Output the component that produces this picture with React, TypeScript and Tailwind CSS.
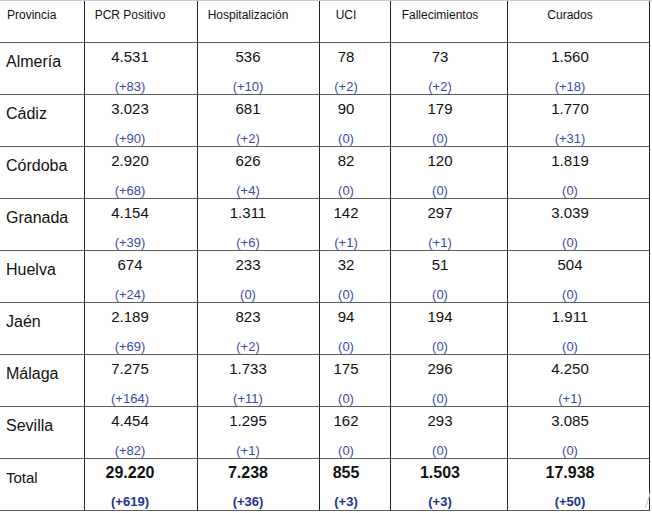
const COLS = ['PCR Positivo', 'Hospitalización', 'UCI', 'Fallecimientos', 'Curados'];

type Row = { name: string; vals: [string, string][] };

const ROWS: Row[] = [
  { name: 'Almería', vals: [['4.531', '+83'], ['536', '+10'], ['78', '+2'], ['73', '+2'], ['1.560', '+18']] },
  { name: 'Cádiz', vals: [['3.023', '+90'], ['681', '+2'], ['90', '0'], ['179', '0'], ['1.770', '+31']] },
  { name: 'Córdoba', vals: [['2.920', '+68'], ['626', '+4'], ['82', '0'], ['120', '0'], ['1.819', '0']] },
  { name: 'Granada', vals: [['4.154', '+39'], ['1.311', '+6'], ['142', '+1'], ['297', '+1'], ['3.039', '0']] },
  { name: 'Huelva', vals: [['674', '+24'], ['233', '0'], ['32', '0'], ['51', '0'], ['504', '0']] },
  { name: 'Jaén', vals: [['2.189', '+69'], ['823', '+2'], ['94', '0'], ['194', '0'], ['1.911', '0']] },
  { name: 'Málaga', vals: [['7.275', '+164'], ['1.733', '+11'], ['175', '0'], ['296', '0'], ['4.250', '+1']] },
  { name: 'Sevilla', vals: [['4.454', '+82'], ['1.295', '+1'], ['162', '0'], ['293', '0'], ['3.085', '0']] },
];

const TOTAL: [string, string][] = [['29.220', '+619'], ['7.238', '+36'], ['855', '+3'], ['1.503', '+3'], ['17.938', '+50']];

// right padding per column so the centred text sits left of the middle like the source
const PAD = ['pr-[22px]', 'pr-[21px]', 'pr-[18px]', 'pr-[18px]', 'pr-[17px]'];

const cell = 'border-r border-b border-r-[#222] border-b-[#5c5c5c]';

export default function App() {
  return (
    <div className="relative h-[513px] w-[652px] bg-white font-['Liberation_Sans',Arial,sans-serif] text-[#111]">
      <div className="grid grid-cols-[85px_113px_122px_71px_117px_142px] border-t border-t-[#c8c8c8]">
        {/* Header */}
        <div className={`${cell} h-[42px] pl-[7px] pt-[7px] text-[12px] leading-[15px]`}>Provincia</div>
        {COLS.map((c, i) => (
          <div key={c} className={`${cell} ${PAD[i]} h-[42px] pt-[7px] text-center text-[12px] leading-[15px]`}>
            {c}
          </div>
        ))}

        {/* Provinces */}
        {ROWS.map((r) => (
          <Line key={r.name} name={r.name} vals={r.vals} bold={false} />
        ))}
        <Line name="Total" vals={TOTAL} bold />
      </div>

      {/* stray stroke beyond the table edge */}
      <svg className="absolute left-[644px] top-[491px]" width="8" height="18" viewBox="0 0 8 18">
        <line x1="6.5" y1="1" x2="1.5" y2="17" stroke="#cfcfcf" strokeWidth="1.3" />
      </svg>
    </div>
  );
}

function Line({ name, vals, bold }: { name: string; vals: [string, string][]; bold: boolean }) {
  return (
    <>
      <div className={`${cell} h-[52px] pl-[6px] pt-[9px] ${bold ? 'text-[15px]' : 'text-[16px]'} leading-[20px]`}>
        {name}
      </div>
      {vals.map(([v, d], i) => (
        <div key={i} className={`${cell} ${PAD[i]} flex h-[52px] flex-col justify-between text-center`}>
          <div className={`pt-[4px] leading-[20px] ${bold ? 'text-[16px] font-bold' : 'text-[15px]'}`}>{v}</div>
          <div
            className={`leading-[14px] ${bold ? 'pb-[1px] text-[13px] font-bold text-[#23328f]' : 'text-[13px] text-[#3b4aa8]'}`}
          >
            ({d})
          </div>
        </div>
      ))}
    </>
  );
}
